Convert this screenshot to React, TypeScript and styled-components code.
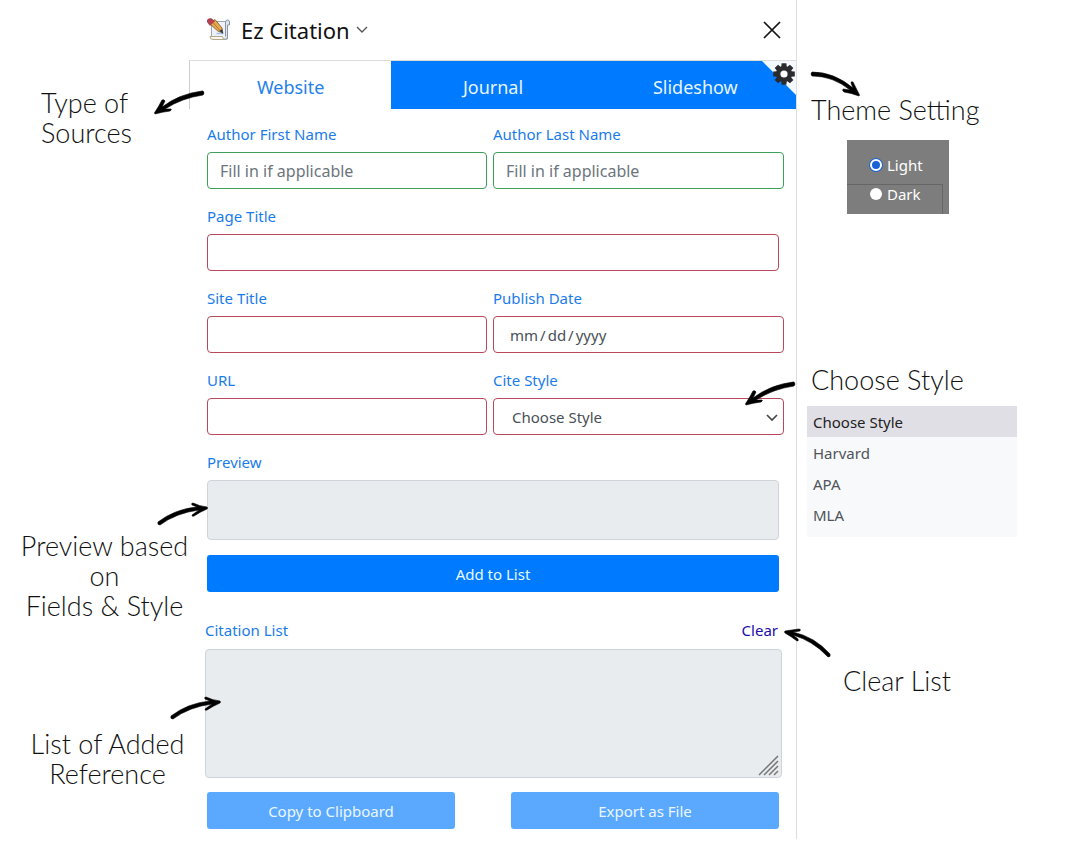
import React, { useId, useState } from "react";
import styled, { createGlobalStyle, css } from "styled-components";

const GlobalStyle = createGlobalStyle`
  *, *::before, *::after { box-sizing: border-box; }
  body {
    margin: 0;
    background: #fff;
    color: #212529;
    font: 15px/24px "Noto Sans", "Open Sans", sans-serif;
  }
  button, input, select, textarea { font: inherit; }
`;

const Page = styled.main`
  display: grid;
  grid-template-columns: minmax(0, 189fr) minmax(0, 608fr) minmax(0, 273fr);
`;

/* ---------- annotations ---------- */

const Notes = styled.aside`
  display: flex;
  flex-direction: column;
`;

const Note = styled.p<{ $gap: number; $indent?: number; $align?: "left" | "center" }>`
  position: relative;
  margin: ${(p) => p.$gap}px 0 0 ${(p) => p.$indent ?? 0}px;
  font: 300 27px/30px Lato, "Open Sans", sans-serif;
  color: #111;
  text-align: ${(p) => p.$align ?? "left"};
  white-space: nowrap;
`;

const ArrowSvg = styled.svg<{ $x: number; $y: number }>`
  position: absolute;
  z-index: 2;
  left: ${(p) => p.$x}px;
  top: ${(p) => p.$y}px;
  overflow: visible;
  fill: #000;
  stroke: #000;
  stroke-width: 0.6;
  pointer-events: none;
`;

type ArrowProps = { x: number; y: number; w: number; h: number; d: string };

const Arrow = ({ x, y, w, h, d }: ArrowProps) => (
  <ArrowSvg $x={x} $y={y} width={w} height={h} viewBox={`0 0 ${w} ${h}`} aria-hidden="true">
    <path d={d} />
  </ArrowSvg>
);

const arrows = {
  downLeft:
    "M49 0 Q51 2 49 4 Q28 7 11 18 L17 18 Q18 19 16 20 Q8 21 1 23 Q0 22 1 21 Q5 15 8 9 Q10 8 11 10 L8 16 Q25 3 48 0Z",
  downRight:
    "M1 0 Q-1 2 1 4 Q22 4 39 18 L32 17 Q31 19 33 20 Q40 21 48 24 Q49 23 48 22 Q45 16 42 10 Q40 9 40 11 L42 16 Q23 0 1 0Z",
  upRight:
    "M1 19 Q0 22 3 22 Q19 10 42 7 L35 12 Q35 14 37 13 Q43 9 50 6 Q51 5 50 4 Q42 3 36 0 Q34 0 35 2 L40 4 Q18 6 1 19Z",
  upLeft:
    "M44 28 Q47 28 46 25 Q31 8 9 3 L16 2 Q17 0 15 0 Q8 1 1 2 Q0 3 1 4 Q8 8 13 12 Q15 12 14 10 L9 6 Q29 12 43 27Z",
};

const ThemeBox = styled.fieldset`
  width: 102px;
  margin: 15px 0 0 50px;
  padding: 10px 0 0;
  border: 0;
  background: #7d7d7d;
  color: #fff;
`;

const ThemeOption = styled.label<{ $framed?: boolean }>`
  display: flex;
  align-items: center;
  gap: 5px;
  height: 34px;
  padding: 0 0 4px 23px;
  ${(p) =>
    p.$framed &&
    css`
      height: 30px;
      margin-right: 6px;
      padding-bottom: 12px;
      border: solid #666;
      border-width: 1px 1px 0 0;
    `}
`;

const Radio = styled.input`
  appearance: none;
  width: 12px;
  height: 12px;
  margin: 0;
  border-radius: 50%;
  background: #fff;
  &:checked {
    border: 2px solid #fff;
    background: #1763d6;
    box-shadow: 0 0 0 1px #1763d6;
  }
`;

const Options = styled.ul`
  width: 210px;
  margin: 11px 0 0 10px;
  padding: 0 0 7px;
  list-style: none;
  background: #f8f9fb;
`;

const Option = styled.li<{ $active?: boolean }>`
  padding: 4px 6px 3px;
  color: ${(p) => (p.$active ? "#222" : "#50545a")};
  background: ${(p) => (p.$active ? "#e0dfe6" : "transparent")};
`;

/* ---------- panel ---------- */

const Panel = styled.section`
  padding-bottom: 10px;
  border-right: 1px solid #dedede;
`;

const Header = styled.header`
  display: flex;
  align-items: center;
  height: 61px;
  padding: 0 15px 0 18px;
  border-bottom: 1px solid #dcdcdc;
`;

const Title = styled.h1`
  margin: 0 6px 0 10px;
  font-size: 22px;
  line-height: 30px;
  font-weight: 400;
  color: #111;
`;

const IconButton = styled.button`
  display: flex;
  padding: 0;
  border: 0;
  background: none;
  cursor: pointer;
`;

const CloseButton = styled(IconButton)`
  margin-left: auto;
`;

const Tabs = styled.nav`
  position: relative;
  display: grid;
  grid-template-columns: repeat(3, 1fr);
`;

const Tab = styled.button<{ $active?: boolean }>`
  height: 48px;
  padding: 3px 0 0;
  border: 0;
  border-left: 1px solid ${(p) => (p.$active ? "#ccc" : "#007bff")};
  background: ${(p) => (p.$active ? "#fff" : "#007bff")};
  color: ${(p) => (p.$active ? "#1f80ee" : "#e8f4ff")};
  font-size: 18px;
`;

const SettingsButton = styled(IconButton)`
  position: absolute;
  top: 0;
  right: 0;
`;

const Form = styled.form`
  display: flex;
  flex-direction: column;
  gap: 15px;
  padding: 13px 12px 0 18px;
`;

const Row = styled.div`
  display: grid;
  grid-template-columns: 280fr 291fr;
  gap: 6px;
`;

const Wide = styled.div`
  display: flex;
  flex-direction: column;
  margin-right: 5px;
`;

const FieldBox = styled.div`
  display: flex;
  flex-direction: column;
  gap: 6px;
`;

const Label = styled.label`
  color: #1a7cea;
`;

const control = css<{ $optional?: boolean }>`
  width: 100%;
  height: 37px;
  padding: 0 12px;
  border: 1px solid ${(p) => (p.$optional ? "#3c9f5a" : "#b8485a")};
  border-radius: 4px;
  background: #fff;
  color: #495057;
`;

const TextInput = styled.input<{ $optional?: boolean }>`
  ${control}
  &::placeholder { color: #6c757d; opacity: 1; font-size: 16px; }
`;

const DateInput = styled.input<{ $optional?: boolean }>`
  ${control}
  padding: 0 16px;
  &::-webkit-calendar-picker-indicator { display: none; }
  &::-webkit-datetime-edit-text { padding: 0 2px; }
  &::-webkit-datetime-edit-month-field,
  &::-webkit-datetime-edit-day-field,
  &::-webkit-datetime-edit-year-field { padding: 0; }
`;

const SelectWrap = styled.div`
  position: relative;
`;

const Select = styled.select<{ $optional?: boolean }>`
  ${control}
  display: block;
  padding: 0 18px;
  appearance: none;
`;

const SelectChevron = styled.svg`
  position: absolute;
  right: 6px;
  top: 16px;
  pointer-events: none;
`;

const Output = styled.textarea<{ $height: number }>`
  display: block;
  width: 100%;
  height: ${(p) => p.$height}px;
  padding: 6px 12px;
  border: 1px solid #ced4da;
  border-radius: 4px;
  background: #e9ecef;
  color: #495057;
  resize: none;
`;

const Button = styled.button`
  height: 37px;
  border: 0;
  border-radius: 3px;
  background: #007bff;
  color: #e8f8ff;
  &:disabled { background: #5aa9ff; color: #ebf7ff; }
`;

const Citations = styled.section`
  margin: 26px 14px 0 16px;
`;

const CitationHead = styled.div`
  display: flex;
  justify-content: space-between;
  margin-bottom: 7px;
  padding-right: 4px;
`;

const ClearLink = styled.a`
  color: #1a0dab;
  text-decoration: none;
`;

const ListWrap = styled.div`
  position: relative;
`;

const Grip = styled.svg`
  position: absolute;
  right: 3px;
  bottom: 2px;
  pointer-events: none;
`;

const Actions = styled.div`
  display: grid;
  grid-template-columns: 248fr 268fr;
  gap: 56px;
  margin: 14px 17px 0 18px;
`;

const Logo = () => (
  <svg width="24" height="24" viewBox="0 0 24 24" aria-hidden="true">
    <path d="M4.5 3.5h16v17.5h-14q-2.5 0-2.5-2.5h.5z" fill="#eef2f8" stroke="#9aa7b5" />
    <path d="M18.5 18.5V4q0-2 2-2t2 2v3h-2v12q0 2.5-2.5 2.5" fill="#dfe5ec" stroke="#8795a5" />
    <path d="M3 18.5h12.5q0 3 2.5 3H6q-3 0-3-3z" fill="#fbf7ee" stroke="#b3a98b" />
    <path d="M9.5 15.5h7" stroke="#9fbfe8" strokeWidth="1.4" />
    <path d="M3 6l5-4.5 7 8.5.8 5-5-2z" fill="#e3a850" stroke="#7d5428" strokeWidth=".8" />
    <path d="M5.5 4l7.5 8.5" stroke="#b87a2f" />
    <path d="M0 3.5q0-3 4-3l3.5 2.5-4.5 4.5z" fill="#b8404f" stroke="#8d3140" strokeWidth=".6" />
    <path d="M12.5 12.8l3.6 3-1-4.5z" fill="#22344a" />
  </svg>
);

const gearTeeth = [0, 45, 90, 135, 180, 225, 270, 315];

const Gear = () => (
  <svg width="34" height="34" viewBox="0 0 34 34" aria-hidden="true">
    <path d="M0 0h34v34z" fill="#f4f9ff" />
    <g transform="translate(22 13)" fill="#2b2b2d">
      {gearTeeth.map((angle) => (
        <path key={angle} d="M-2.8 -6L-2.4 -10.8H2.4L2.8 -6z" transform={`rotate(${angle})`} />
      ))}
      <circle r="8" />
      <circle r="3.6" fill="#fff" />
    </g>
  </svg>
);

type FieldProps = { label: string; children: (id: string) => React.ReactNode };

const Field = ({ label, children }: FieldProps) => {
  const id = useId();
  return (
    <FieldBox>
      <Label htmlFor={id}>{label}</Label>
      {children(id)}
    </FieldBox>
  );
};

const tabs = ["Website", "Journal", "Slideshow"];
const styles = ["Choose Style", "Harvard", "APA", "MLA"];

export default function App() {
  const [tab, setTab] = useState("Website");
  const [theme, setTheme] = useState("Light");

  return (
    <>
      <GlobalStyle />
      <Page>
        <Notes>
          <Note $gap={88} $indent={41}>
            Type of
            <br />
            Sources
            <Arrow x={113} y={3} w={50} h={24} d={arrows.downLeft} />
          </Note>
          <Note $gap={383} $indent={20} $align="center">
            Preview based
            <br />
            on
            <br />
            Fields &amp; Style
            <Arrow x={137} y={-28} w={50} h={23} d={arrows.upRight} />
          </Note>
          <Note $gap={108} $indent={26} $align="center">
            List of Added
            <br />
            Reference
            <Arrow x={144} y={-32} w={50} h={23} d={arrows.upRight} />
          </Note>
        </Notes>

        <Panel>
          <Header>
            <Logo />
            <Title>Ez Citation</Title>
            <IconButton type="button" aria-label="Switch extension">
              <svg width="12" height="8" viewBox="0 0 12 8" fill="none" stroke="#555" strokeWidth="1.4">
                <path d="M1 1l5 5 5-5" />
              </svg>
            </IconButton>
            <CloseButton type="button" aria-label="Close">
              <svg width="18" height="18" viewBox="0 0 18 18" fill="none" stroke="#111" strokeWidth="1.7">
                <path d="M1 1l16 16M17 1L1 17" />
              </svg>
            </CloseButton>
          </Header>

          <Tabs>
            {tabs.map((name) => (
              <Tab key={name} type="button" $active={name === tab} onClick={() => setTab(name)}>
                {name}
              </Tab>
            ))}
            <SettingsButton type="button" aria-label="Theme settings">
              <Gear />
            </SettingsButton>
          </Tabs>

          <Form onSubmit={(e) => e.preventDefault()}>
            <Row>
              <Field label="Author First Name">
                {(id) => <TextInput id={id} $optional placeholder="Fill in if applicable" />}
              </Field>
              <Field label="Author Last Name">
                {(id) => <TextInput id={id} $optional placeholder="Fill in if applicable" />}
              </Field>
            </Row>
            <Wide>
              <Field label="Page Title">{(id) => <TextInput id={id} />}</Field>
            </Wide>
            <Row>
              <Field label="Site Title">{(id) => <TextInput id={id} />}</Field>
              <Field label="Publish Date">{(id) => <DateInput id={id} type="date" />}</Field>
            </Row>
            <Row>
              <Field label="URL">{(id) => <TextInput id={id} />}</Field>
              <Field label="Cite Style">
                {(id) => (
                  <SelectWrap>
                    <Select id={id}>
                      {styles.map((s) => (
                        <option key={s}>{s}</option>
                      ))}
                    </Select>
                    <SelectChevron width="12" height="8" viewBox="0 0 12 8" fill="none" stroke="#444" strokeWidth="1.6">
                      <path d="M1 1l5 5 5-5" />
                    </SelectChevron>
                  </SelectWrap>
                )}
              </Field>
            </Row>
            <Wide>
              <Field label="Preview">{(id) => <Output id={id} $height={60} readOnly />}</Field>
            </Wide>
            <Wide>
              <Button type="submit">Add to List</Button>
            </Wide>
          </Form>

          <Citations>
            <CitationHead>
              <Label htmlFor="citations">Citation List</Label>
              <ClearLink href="#clear">Clear</ClearLink>
            </CitationHead>
            <ListWrap>
              <Output id="citations" $height={129} readOnly />
              <Grip width="21" height="21" viewBox="0 0 21 21" stroke="#777" strokeWidth="1.5">
                <path d="M1 20L20 1M6 20L20 6M11 20l9-9M16 20l4-4" />
              </Grip>
            </ListWrap>
          </Citations>
          <Actions>
            <Button type="button" disabled>
              Copy to Clipboard
            </Button>
            <Button type="button" disabled>
              Export as File
            </Button>
          </Actions>
        </Panel>

        <Notes>
          <Note $gap={95} $indent={14}>
            Theme Setting
            <Arrow x={0} y={-23} w={49} h={24} d={arrows.downRight} />
          </Note>
          <ThemeBox aria-label="Theme">
            <ThemeOption>
              <Radio type="radio" name="theme" checked={theme === "Light"} onChange={() => setTheme("Light")} />
              Light
            </ThemeOption>
            <ThemeOption $framed>
              <Radio type="radio" name="theme" checked={theme === "Dark"} onChange={() => setTheme("Dark")} />
              Dark
            </ThemeOption>
          </ThemeBox>
          <Note $gap={151} $indent={14}>
            Choose Style
            <Arrow x={-66} y={17} w={50} h={24} d={arrows.downLeft} />
          </Note>
          <Options>
            {styles.map((s, i) => (
              <Option key={s} $active={i === 0}>
                {s}
              </Option>
            ))}
          </Options>
          <Note $gap={129} $indent={46}>
            Clear List
            <Arrow x={-59} y={-37} w={47} h={29} d={arrows.upLeft} />
          </Note>
        </Notes>
      </Page>
    </>
  );
}
